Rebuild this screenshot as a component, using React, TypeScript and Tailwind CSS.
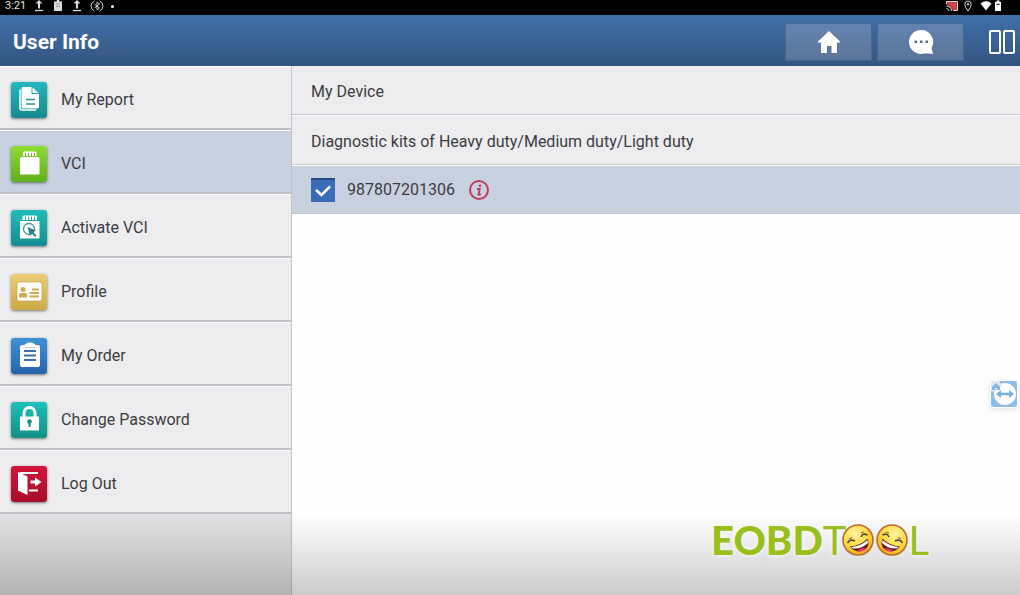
import { ReactNode, useState } from "react";

type MenuEntry = {
  label: string;
  tile: string;
  icon: ReactNode;
};

const menu: MenuEntry[] = [
  { label: "My Report", tile: "from-[#22b9bd] to-[#17898f]", icon: <ReportIcon /> },
  { label: "VCI", tile: "from-[#8fdc32] to-[#5fb01a]", icon: <VciIcon /> },
  { label: "Activate VCI", tile: "from-[#1fbdb9] to-[#138d92]", icon: <ActivateIcon /> },
  { label: "Profile", tile: "from-[#eacd72] to-[#cda945]", icon: <ProfileIcon /> },
  { label: "My Order", tile: "from-[#3f92d6] to-[#2563ad]", icon: <OrderIcon /> },
  { label: "Change Password", tile: "from-[#1cc2ba] to-[#128f88]", icon: <LockIcon /> },
  { label: "Log Out", tile: "from-[#d5143a] to-[#a50d2a]", icon: <LogOutIcon /> },
];

function ReportIcon() {
  return (
    <svg viewBox="0 0 36 36" className="size-9">
      <path d="M9 7.500V26q0 2 2 2H25" fill="none" stroke="#fff" strokeWidth="1.500" />
      <path d="M12 5H20.500V12H28V24.500q0 2-2 2H12q-1.500 0-1.500-2V6.500Q10.500 5 12 5Z" fill="#fff" />
      <path d="M21.500 5.500L27.500 11H21.500Z" fill="#fff" />
      <path d="M15 17.500H24M15 22H24" stroke="#2a8f96" strokeWidth="1.500" />
    </svg>
  );
}

function VciIcon() {
  return (
    <svg viewBox="0 0 36 36" className="size-9">
      <path d="M12 10V7q0-1.500 1.500-1.500H24q1.500 0 1.500 1.500V10Z" fill="#fff" />
      <path d="M14.500 7V10M17.500 7V10M20.500 7V10M23.500 7V10" stroke="#6fae35" strokeWidth="1" />
      <path d="M9 13q0-2 2-2H26.500q2 0 2 2V28.500H9Z" fill="#fff" />
    </svg>
  );
}

function ActivateIcon() {
  return (
    <svg viewBox="0 0 36 36" className="size-9">
      <path d="M11.500 10V7q0-1.500 1.500-1.500H24.500q1.500 0 1.500 1.500V10Z" fill="#fff" />
      <path d="M14.500 6.500V10M17.500 6.500V10M20.500 6.500V10M23.500 6.500V10" stroke="#28a5a5" strokeWidth="1" />
      <path d="M9 12q0-1 1-1H27.500q1 0 1 1V28.500H9Z" fill="#fff" />
      <circle cx="18" cy="19" r="5.500" fill="none" stroke="#3b949b" strokeWidth="1.300" />
      <path d="M16.500 17L25 20.500L22.200 22L25.500 25.500L24 27L20.800 23.500L19 26Z" fill="#2f7f88" />
    </svg>
  );
}

function ProfileIcon() {
  return (
    <svg viewBox="0 0 36 36" className="size-9">
      <rect x="6" y="8" width="25" height="19" rx="2.500" fill="#fffdf5" stroke="#b8933a" strokeWidth="0.500" />
      <circle cx="12" cy="15.500" r="2.500" fill="#c8ad5a" />
      <path d="M8 23.500V21q0-2 2-2H14q2 0 2 2V23.500Z" fill="#c8ad5a" />
      <path d="M21 15.500H28M18.500 19H28M18.500 22.500H28" stroke="#c8ad5a" strokeWidth="2" />
    </svg>
  );
}

function OrderIcon() {
  return (
    <svg viewBox="0 0 36 36" className="size-9">
      <rect x="9" y="7" width="20" height="22" rx="2" fill="#fff" />
      <path d="M13.500 9V7q0-1.500 2-1.500L17 4.500H21L22.500 5.500q2 0 2 1.500V9Z" fill="#fff" />
      <path d="M14 9.500H24" stroke="#a9c6e8" strokeWidth="0.800" />
      <path d="M13 13H25M13 17.500H25M13 22H25" stroke="#3b6fb0" strokeWidth="1.800" />
    </svg>
  );
}

function LockIcon() {
  return (
    <svg viewBox="0 0 36 36" className="size-9">
      <path d="M13 15V11a5.500 5.500 0 0 1 11 0V15" fill="none" stroke="#fff" strokeWidth="3" />
      <rect x="9" y="14.500" width="19" height="14" rx="0.500" fill="#fff" />
      <circle cx="18.500" cy="19.500" r="2.300" fill="#17857f" />
      <path d="M17.500 20H19.500V25H17.500Z" fill="#17857f" />
    </svg>
  );
}

function LogOutIcon() {
  return (
    <svg viewBox="0 0 36 36" className="size-9">
      <path d="M9 7H27M18 24.500H27" stroke="#fff" strokeWidth="2.200" />
      <path d="M7 6L16.500 10.500V29L7 24.500Z" fill="#fff" />
      <path d="M19.500 14.500H24V11.500L30.500 16L24 20.500V17.500H19.500Z" fill="#fff" />
    </svg>
  );
}

function UploadIcon() {
  return (
    <svg viewBox="0 0 12 12" className="size-3">
      <path d="M6 0L9.500 3.500H7V8.500H5V3.500H2.500Z" fill="#ddd" />
      <path d="M2 10.500H10" stroke="#ddd" strokeWidth="1.300" />
    </svg>
  );
}

function StatusBar() {
  return (
    <div className="flex h-[15px] items-start justify-between bg-black pr-[18px] pl-[5px] font-[Roboto] text-[11px] leading-3 text-[#e0e0e0]">
      <div className="flex items-center">
        <span className="w-7">3:21</span>
        <div className="flex items-center gap-[7px]">
          <UploadIcon />
          <svg viewBox="0 0 12 12" className="size-3">
            <path d="M2 1.500H4.500L5 0H7L7.500 1.500H10V11H2Z" fill="#ddd" />
            <path d="M4 4H8M4 6.500H8" stroke="#888" strokeWidth="0.800" />
          </svg>
          <UploadIcon />
          <svg viewBox="0 0 14 12" className="h-3 w-3.5" fill="none" stroke="#ccc" strokeWidth="1">
            <path d="M4.500 1Q1 2.500 1 6T4.500 11M9.500 1Q13 2.500 13 6T9.500 11" />
            <path d="M4.500 4L9.500 8L7 10V2L9.500 4L4.500 8" />
          </svg>
          <span className="size-[3px] rounded-full bg-white" />
        </div>
      </div>
      <div className="flex items-center">
        <svg viewBox="0 0 12 12" className="mr-1 size-3">
          <path d="M0.500 4V1.500H11.500V10.500H7" fill="#b93c3c" stroke="#ddd" />
          <path d="M3 3.500H10V9H7.500Q6.500 5 3 4.500Z" fill="#d94545" />
          <path d="M0.500 6Q5 6 5.500 11M0.500 8.500Q2.500 8.500 3 11" stroke="#ddd" fill="none" />
        </svg>
        <svg viewBox="0 0 12 12" className="mr-1.5 size-3" fill="none" stroke="#ddd">
          <path d="M6 11Q2.800 7 2.800 4.300a3.200 3.200 0 0 1 6.400 0Q9.200 7 6 11Z" />
          <circle cx="6" cy="4.300" r="0.800" fill="#ddd" />
        </svg>
        <svg viewBox="0 0 12 12" className="mr-0.5 size-3">
          <path d="M0.500 3.500Q6-1.500 11.500 3.500L6 10.500Z" fill="#fff" />
        </svg>
        <svg viewBox="0 0 8 12" className="h-3 w-2">
          <path d="M1 2H2.500V0.500H5.500V2H7V11H1Z" fill="#fff" />
          <path d="M2.300 3.800H5.700V5H2.300Z" fill="#333" />
        </svg>
      </div>
    </div>
  );
}

const headerButton =
  "flex h-[38px] w-[87px] items-center justify-center border border-[#46658f] bg-linear-to-b from-[#6383b0] to-[#5a7497]";

function Header() {
  return (
    <header className="flex h-[51px] items-center bg-linear-to-b from-[#4070aa] to-[#345580] pt-0.5 pl-[13px]">
      <h1 className="flex-1 font-[Roboto] text-[21px] leading-6 font-bold text-white">User Info</h1>
      <div className="flex items-center gap-[5px]">
        <button type="button" aria-label="Home" className={headerButton}>
          <svg viewBox="0 0 22 24" className="h-6 w-[22px]">
            <path d="M11 1L22 11.500V12.500H19V23H13.500V16H9V23H3V12.500H0V11.500Z" fill="#fff" />
          </svg>
        </button>
        <button type="button" aria-label="Messages" className={headerButton}>
          <svg viewBox="0 0 26 26" className="size-[26px]">
            <path d="M13 1a12 12 0 1 0 4 23.300L25 25L23.500 19A12 12 0 0 0 13 1Z" fill="#fff" />
            <path d="M6.500 11.500H9V14H6.500ZM12 11.500H14.500V14H12ZM17.500 11.500H20V14H17.500Z" fill="#5a6f8c" />
          </svg>
        </button>
      </div>
      <button type="button" aria-label="Split view" className="mr-1 ml-6">
        <svg viewBox="0 0 28 26" className="h-[26px] w-7" fill="none" stroke="#fff" strokeWidth="2">
          <rect x="2" y="2" width="10" height="22" rx="1" />
          <rect x="16" y="2" width="10" height="22" rx="1" />
        </svg>
      </button>
    </header>
  );
}

function Sidebar() {
  const [active, setActive] = useState("VCI");
  return (
    <nav className="w-[292px] shrink-0 border-r border-[#c4c4c8] bg-[#e2e0e2]">
      {menu.map((entry) => (
        <button
          key={entry.label}
          type="button"
          onClick={() => setActive(entry.label)}
          className={`flex h-16 w-full items-center gap-3.5 border-t border-b-2 border-t-white border-b-[#c0c0c4] pt-1 pl-[11px] text-left ${
            entry.label === active ? "bg-[#c8d1e0]" : "bg-[#ededef]"
          }`}
        >
          <span
            className={`flex size-9 items-center justify-center rounded-[3px] bg-linear-to-b shadow-[0_1px_3px_rgba(0,0,0,0.5)] ${entry.tile}`}
          >
            {entry.icon}
          </span>
          {entry.label}
        </button>
      ))}
    </nav>
  );
}

function Device() {
  return (
    <main className="min-w-0 flex-1 bg-[#fefefe]">
      <h2 className="flex h-[49px] items-center border-b border-[#c2c2c8] bg-[#ededef] pt-1 pl-[19px]">My Device</h2>
      <h3 className="flex h-[50px] items-center border-t border-b border-t-white border-b-[#c9c9d0] bg-[#ededef] pt-1 pl-[19px]">
        Diagnostic kits of Heavy duty/Medium duty/Light duty
      </h3>
      <div className="flex h-[49px] items-center border-t border-b border-t-white border-b-[#bcc4d0] bg-[#c8d1e0] pl-[19px]">
        <label htmlFor="device" className="flex items-center gap-3">
          <span className="relative flex size-6">
            <input
              id="device"
              type="checkbox"
              defaultChecked
              className="peer size-6 appearance-none border-t-2 border-[#2a4a80] bg-white checked:bg-[#3a6cb8]"
            />
            <svg
              viewBox="0 0 24 24"
              className="pointer-events-none absolute inset-0 hidden size-6 peer-checked:block"
              fill="none"
              stroke="#fff"
              strokeWidth="2.500"
            >
              <path d="M5 12L10.500 17L19 8.500" />
            </svg>
          </span>
          987807201306
        </label>
        <button type="button" aria-label="Device details" className="ml-3.5">
          <svg viewBox="0 0 20 20" className="size-5">
            <circle cx="10" cy="10" r="9" fill="none" stroke="#c23a5a" strokeWidth="2" />
            <circle cx="11" cy="5.800" r="1.300" fill="#b83a5a" />
            <path d="M8 9H10.800L9.500 14.500H11.800" fill="none" stroke="#b83a5a" strokeWidth="1.800" />
          </svg>
        </button>
      </div>
    </main>
  );
}

function Laugh({ flip }: { flip?: boolean }) {
  return (
    <svg viewBox="0 0 32 32" className={`size-8 ${flip ? "-scale-x-100" : ""}`}>
      <defs>
        <radialGradient id="face" cx="40%" cy="30%" r="75%">
          <stop offset="0" stopColor="#fff3a0" />
          <stop offset="0.600" stopColor="#ffd83a" />
          <stop offset="1" stopColor="#f3a51c" />
        </radialGradient>
      </defs>
      <circle cx="16" cy="16" r="15" fill="url(#face)" stroke="#b9692a" strokeWidth="1.500" />
      <path d="M8 22.500Q19 21.500 25.500 14.500Q28.500 22 22.500 26Q14 30 8 22.500Z" fill="#5a1f1c" />
      <path d="M9.500 23Q19 22 25.300 16L26 19Q20 25 11 24.500Z" fill="#fff" />
      <path d="M15 27.500Q17 23.500 24.500 24Q20 28.500 15 27.500Z" fill="#e5386b" />
      <path d="M5.500 19Q8 14.500 13 17M19 13Q20.500 8.500 25.500 11" fill="none" stroke="#514a3c" strokeWidth="1.600" />
      <path d="M7 15L10 13.500M19 9L22 8" stroke="#8a7432" strokeWidth="1.200" />
    </svg>
  );
}

function Watermark() {
  return (
    <div className="pointer-events-none absolute right-[91px] bottom-8 flex items-center font-[Lato] text-[40px] leading-[46px] text-[#98bf1a] [text-shadow:0_0_4px_white]">
      <span className="font-black">EOBD</span>
      <span className="-mr-1">T</span>
      <Laugh />
      <span className="ml-0.5 flex">
        <Laugh flip />
      </span>
      <span>L</span>
    </div>
  );
}

function RemoteBadge() {
  return (
    <button
      type="button"
      aria-label="Remote control"
      className="absolute top-[380px] right-0.5 rounded-sm bg-white shadow-[0_2px_5px_rgba(0,0,0,0.1)]"
    >
      <svg viewBox="0 0 28 28" className="size-7">
        <rect x="1" y="1" width="26" height="26" rx="2" fill="#8dbde8" />
        <circle cx="15" cy="14" r="11" fill="#fff" />
        <path d="M1 11V1H9L12 5L5 12Z" fill="#dfe9f5" />
        <path d="M2 7L6 3L10 7V10H7V8H5V10H2Z" fill="#86b7e4" />
        <path d="M6 14L11 10V12.800H19V10L24 14L19 18V15.200H11V18Z" fill="#79aee0" />
      </svg>
    </button>
  );
}

export default function App() {
  return (
    <div className="relative flex min-h-screen flex-col font-[Roboto] text-base text-[#3c3c40]">
      <StatusBar />
      <Header />
      <div className="flex flex-1">
        <Sidebar />
        <Device />
      </div>
      <div className="pointer-events-none absolute inset-x-0 bottom-0 h-20 bg-linear-to-b from-transparent to-black/20" />
      <RemoteBadge />
      <Watermark />
    </div>
  );
}
